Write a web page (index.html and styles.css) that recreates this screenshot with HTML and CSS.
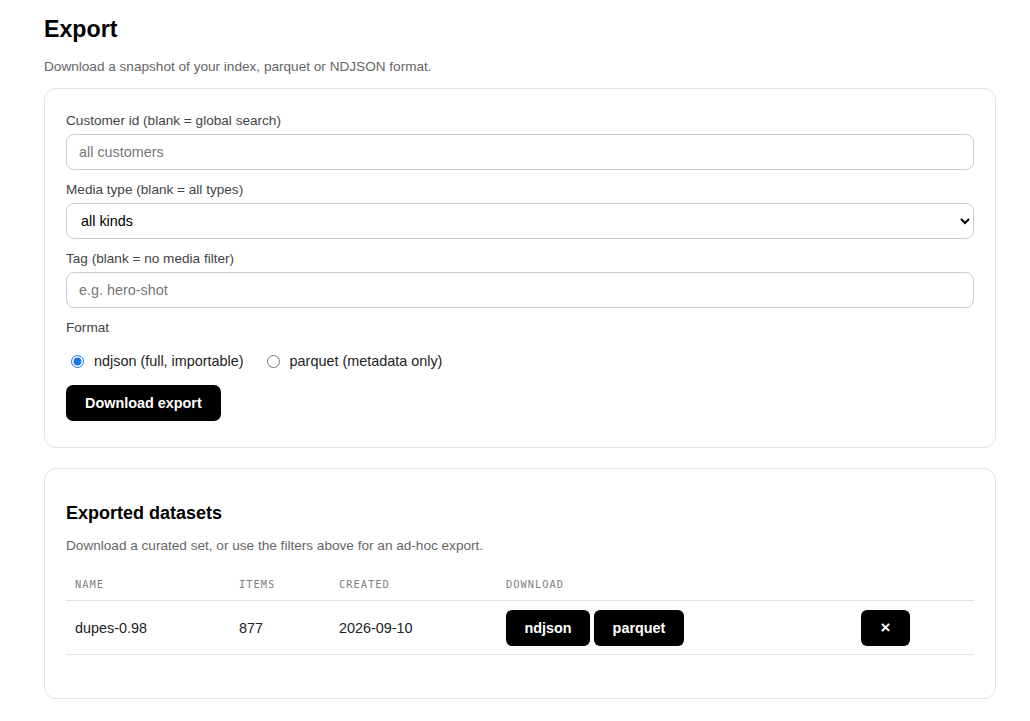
FILE: index.html
```html
<!DOCTYPE html>
<html lang="en">
<head>
    <meta charset="UTF-8">
    <meta name="viewport" content="width=device-width, initial-scale=1.0">
    <title>Export</title>
    <link rel="stylesheet" href="styles.css">
</head>
<body>

<main class="page">
    <h1>Export</h1>
    <p class="lead">Download a snapshot of your index, parquet or NDJSON format.</p>

    <form class="card export-form">
        <label class="field-label" for="customer">Customer id (blank = global search)</label>
        <input class="field" id="customer" type="text" placeholder="all customers">

        <label class="field-label" for="media">Media type (blank = all types)</label>
        <select class="field" id="media">
            <option>all kinds</option>
            <option>image</option>
            <option>video</option>
        </select>

        <label class="field-label" for="tag">Tag (blank = no media filter)</label>
        <input class="field" id="tag" type="text" placeholder="e.g. hero-shot">

        <span class="field-label">Format</span>
        <div class="radios">
            <label class="radio"><input type="radio" name="format" checked> ndjson (full, importable)</label>
            <label class="radio"><input type="radio" name="format"> parquet (metadata only)</label>
        </div>

        <div>
            <button type="button" class="btn btn-lg">Download export</button>
        </div>
    </form>

    <section class="card datasets">
        <h2>Exported datasets</h2>
        <p class="hint">Download a curated set, or use the filters above for an ad-hoc export.</p>

        <table class="table">
            <thead>
                <tr>
                    <th class="col-name">Name</th>
                    <th class="col-items">Items</th>
                    <th class="col-created">Created</th>
                    <th class="col-dl">Download</th>
                    <th></th>
                </tr>
            </thead>
            <tbody>
                <tr>
                    <td>dupes-0.98</td>
                    <td>877</td>
                    <td>2026-09-10</td>
                    <td>
                        <div class="dl-buttons">
                            <button class="btn">ndjson</button>
                            <button class="btn">parquet</button>
                        </div>
                    </td>
                    <td><button class="btn btn-x">&times;</button></td>
                </tr>
            </tbody>
        </table>
    </section>
</main>

</body>
</html>
```

FILE: styles.css
```css
:root {
    --border: #e3e3e3;
    --muted: #666;
    --text: #111;
}

* { box-sizing: border-box; }

body {
    margin: 0;
    background: #fff;
    color: var(--text);
    font-family: 'Liberation Sans', Arial, sans-serif;
}

.page {
    width: 952px;
    margin-left: 44px;
    padding-top: 15px;
    padding-bottom: 24px;
}

h1 { font-size: 23.2px; line-height: 28px; margin: 0 0 16px; color: #000; }

.lead { font-size: 13.6px; color: var(--muted); margin: 0 0 14px; }

.card {
    border: 1px solid var(--border);
    border-radius: 12px;
    padding: 21px 21px 26px;
    margin-bottom: 20px;
}

/* form */
.export-form { display: flex; flex-direction: column; padding-top: 24px; }

.field-label { font-size: 13.6px; color: #444; margin-bottom: 5px; line-height: 16px; }

.field {
    height: 36px;
    border: 1px solid #ccc;
    border-radius: 8px;
    padding: 0 12px;
    font-size: 14.4px;
    font-family: inherit;
    color: #000;
    background: #fff;
    margin-bottom: 12px;
}
.field::placeholder { color: #777; }
select.field { padding-left: 10px; }

.radios { display: flex; gap: 18px; margin: 12px 0 16px; font-size: 14.4px; }
.radio { display: flex; align-items: center; gap: 6px; color: #222; }
.radio input { margin: 0 4px 0 5px; width: 13px; height: 13px; accent-color: #1a73e8; }

.btn {
    background: #000;
    color: #fff;
    border: none;
    border-radius: 6px;
    font-family: inherit;
    font-weight: bold;
    font-size: 14.4px;
    height: 36px;
    padding: 0 18px;
    cursor: pointer;
}
.btn-lg { border-radius: 7px; padding: 0 19px; }
.btn-x { width: 49px; padding: 0; font-size: 17px; }

/* datasets */
.datasets { padding-top: 34px; padding-bottom: 43px; }
.datasets h2 { font-size: 18px; margin: 0 0 14px; color: #000; }
.hint { font-size: 13.6px; color: var(--muted); margin: 0 0 25px; }

.table { width: 100%; border-collapse: collapse; }
.table th {
    text-align: left;
    font-family: 'DejaVu Sans Mono', monospace;
    font-weight: normal;
    font-size: 10.4px;
    letter-spacing: 1px;
    text-transform: uppercase;
    color: #808080;
    padding: 0 9px 10px;
    border-bottom: 1px solid var(--border);
}
.table td {
    font-size: 14.4px;
    color: #222;
    padding: 9px 9px 8px;
    border-bottom: 1px solid var(--border);
}
.col-name { width: 164px; }
.col-items { width: 100px; }
.col-created { width: 167px; }
.col-dl { width: 355px; }

.dl-buttons { display: flex; gap: 4px; }
.dl-buttons .btn:first-child { width: 84px; padding: 0; }
.dl-buttons .btn:last-child { width: 90px; padding: 0; }
```
